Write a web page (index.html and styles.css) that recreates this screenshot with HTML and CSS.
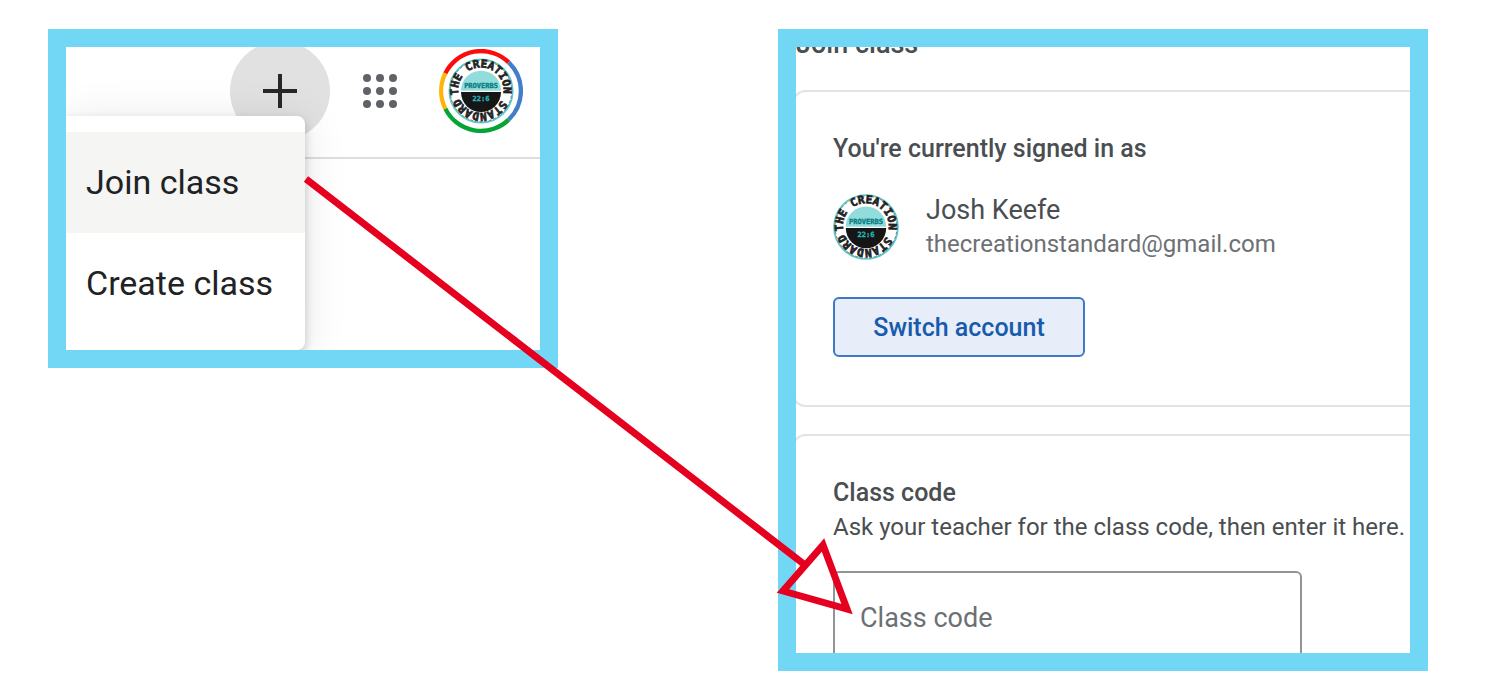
FILE: index.html
```html
<!DOCTYPE html>
<html lang="en">

<head>
    <meta charset="UTF-8" />
    <meta name="viewport" content="width=device-width, initial-scale=1" />
    <title>Join class</title>
    <link rel="stylesheet" href="styles.css">
</head>

<body>
    <main class="steps">
        <section class="panel menu-panel">
            <header class="toolbar">
                <button class="add-btn" type="button" aria-label="Create or join a class">
                    <svg viewBox="0 0 34 34" width="34" height="34">
                        <path d="M17 0V34M0 17H34" stroke="#262829" stroke-width="4" />
                    </svg>
                </button>
                <button class="apps-btn" type="button" aria-label="Google apps">
                    <svg viewBox="0 0 34 34" width="34" height="34" fill="#5f6368">
                        <circle cx="4" cy="4" r="4" /><circle cx="17" cy="4" r="4" /><circle cx="30" cy="4" r="4" />
                        <circle cx="4" cy="17" r="4" /><circle cx="17" cy="17" r="4" /><circle cx="30" cy="17" r="4" />
                        <circle cx="4" cy="30" r="4" /><circle cx="17" cy="30" r="4" /><circle cx="30" cy="30" r="4" />
                    </svg>
                </button>
                <button class="avatar-btn" type="button" aria-label="Google account">
                    <svg viewBox="-126 -126 252 252" width="84" height="84">
                        <g fill="none" stroke-width="13">
                            <path d="M-107 -53 A119 119 0 0 1 83 -86" stroke="#fb0d0d" />
                            <path d="M83 -86 A119 119 0 0 1 83 86" stroke="#437ec8" />
                            <path d="M83 86 A119 119 0 0 1 -107 53" stroke="#05a535" />
                            <path d="M-107 53 A119 119 0 0 1 -107 -53" stroke="#ffb507" />
                        </g>
                        <!-- Logo, reused by the account card -->
                        <g id="logo">
                            <path id="logo-ring" d="M-67 12 A68 68 0 1 1 -66 16" fill="none" />
                            <circle r="95" fill="#fff" stroke="#5cc9cb" stroke-width="5" />
                            <circle r="92" fill="none" stroke="#555" stroke-width="2" stroke-dasharray="9 5" />
                            <path d="M-60 -1 A60 60 0 0 1 60 -1 Z" fill="#93dcdc" />
                            <path d="M-60 3 A60 60 0 0 0 60 3 Z" fill="#161616" />
                            <text class="logo-name"><textPath href="#logo-ring">THE CREATION STANDARD</textPath></text>
                            <text class="logo-word" x="0" y="-10">PROVERBS</text>
                            <text class="logo-verse" x="0" y="31">22:6</text>
                        </g>
                    </svg>
                </button>
            </header>
            <div class="menu">
                <button class="menu-item active" type="button">Join class</button>
                <button class="menu-item" type="button">Create class</button>
            </div>
        </section>

        <section class="panel join-panel">
            <h1 class="title">Join class</h1>
            <div class="card account">
                <h2 class="label">You're currently signed in as</h2>
                <div class="user">
                    <svg viewBox="-98 -98 196 196" width="66" height="66"><use href="#logo" /></svg>
                    <div>
                        <div class="user-name">Josh Keefe</div>
                        <div class="user-mail">thecreationstandard@gmail.com</div>
                    </div>
                </div>
                <button class="switch-btn" type="button">Switch account</button>
            </div>
            <div class="card code">
                <label class="label" for="class-code">Class code</label>
                <p class="hint">Ask your teacher for the class code, then enter it here.</p>
                <input class="code-input" id="class-code" type="text" placeholder="Class code">
            </div>
        </section>
    </main>

    <!-- Arrow from the menu item to the code field -->
    <svg class="arrow" viewBox="0 0 1500 678" aria-hidden="true">
        <path d="M306 179 L805 565 M823 545 L783 591 L847 609 Z" fill="none" stroke="#e6001f" stroke-width="7" />
    </svg>
</body>

</html>
```
FILE: styles.css
```css
* {
    box-sizing: border-box;
}

body {
    margin: 0;
    background: #fff;
    font-family: Roboto, "Liberation Sans", sans-serif;
    color: #4a4e51;
    position: relative;
}

button {
    border: 0;
    padding: 0;
    background: none;
    font-family: inherit;
    cursor: pointer;
}

svg {
    display: block;
}

.steps {
    display: grid;
    grid-template-columns: 51fr 65fr;
    column-gap: 220px;
    align-items: start;
    padding: 29px 72px 7px 48px;
}

.panel {
    border: 18px solid #72d7f5;
    overflow: hidden;
    min-width: 0;
}

/* Left: toolbar and open menu */
.toolbar {
    display: flex;
    justify-content: flex-end;
    align-items: center;
    height: 112px;
    padding: 0 17px 22px 0;
    border-bottom: 2px solid #dedede;
}

.add-btn {
    display: flex;
    align-items: center;
    justify-content: center;
    width: 100px;
    height: 100px;
    border-radius: 50%;
    background: #e1e1e1;
}

.apps-btn {
    margin: 0 42px 0 33px;
}

.menu {
    position: relative;
    width: 239px;
    margin-top: -43px;
    padding: 16px 0;
    border-radius: 0 8px 8px 0;
    background: #fff;
    box-shadow: 0 4px 10px rgba(0, 0, 0, 0.2), 0 4px 44px rgba(0, 0, 0, 0.1);
}

.menu-item {
    display: block;
    width: 100%;
    height: 101px;
    padding: 0 0 2px 20px;
    text-align: left;
    font-size: 34px;
    color: #202224;
}

.menu-item.active {
    background: #f5f5f4;
}

/* Right: join form */
.join-panel {
    height: 642px;
}

.title {
    margin: -18px 0 31px;
    font-size: 27px;
    line-height: 30px;
    font-weight: 500;
}

.card {
    margin: 0 -20px 0 -3px;
    padding: 40px 38px 48px;
    border: 2px solid #e2e3e6;
    border-radius: 12px;
}

.card + .card {
    margin-top: 27px;
}

.label {
    display: block;
    margin: 0;
    font-size: 25px;
    line-height: 34px;
    font-weight: 500;
}

.user {
    display: flex;
    align-items: center;
    gap: 27px;
    margin: 27px 0 36px;
}

.user-name {
    font-size: 27px;
    line-height: 34px;
}

.user-mail {
    font-size: 24px;
    line-height: 34px;
    color: #6c7074;
}

.switch-btn {
    width: 252px;
    height: 60px;
    border: 2px solid #3f78c4;
    border-radius: 6px;
    background: #e7edf9;
    font-size: 25px;
    font-weight: 500;
    color: #175bad;
}

.hint {
    margin: 0 0 27px;
    font-size: 24px;
    line-height: 34px;
    white-space: nowrap;
}

.code-input {
    display: block;
    width: 469px;
    height: 94px;
    padding: 0 25px;
    border: 2px solid #8f9498;
    border-radius: 6px;
    background: none;
    font-family: inherit;
    font-size: 27px;
    color: #4a4e51;
}

.code-input::placeholder {
    color: #6c7074;
    opacity: 1;
}

/* Logo lettering */
.logo-name,
.logo-word,
.logo-verse {
    font-family: "DejaVu Sans Mono", monospace;
    font-weight: bold;
}

.logo-name {
    font-size: 33px;
    fill: #222;
    stroke: #222;
    stroke-width: 2px;
}

.logo-word {
    font-size: 21px;
    text-anchor: middle;
    fill: #087f84;
    stroke: #087f84;
}

.logo-verse {
    font-size: 21px;
    text-anchor: middle;
    fill: #23b4b7;
    stroke: #23b4b7;
}

/* Lies over both panels */
.arrow {
    position: absolute;
    top: 0;
    left: 0;
    width: 100%;
    pointer-events: none;
}
```
